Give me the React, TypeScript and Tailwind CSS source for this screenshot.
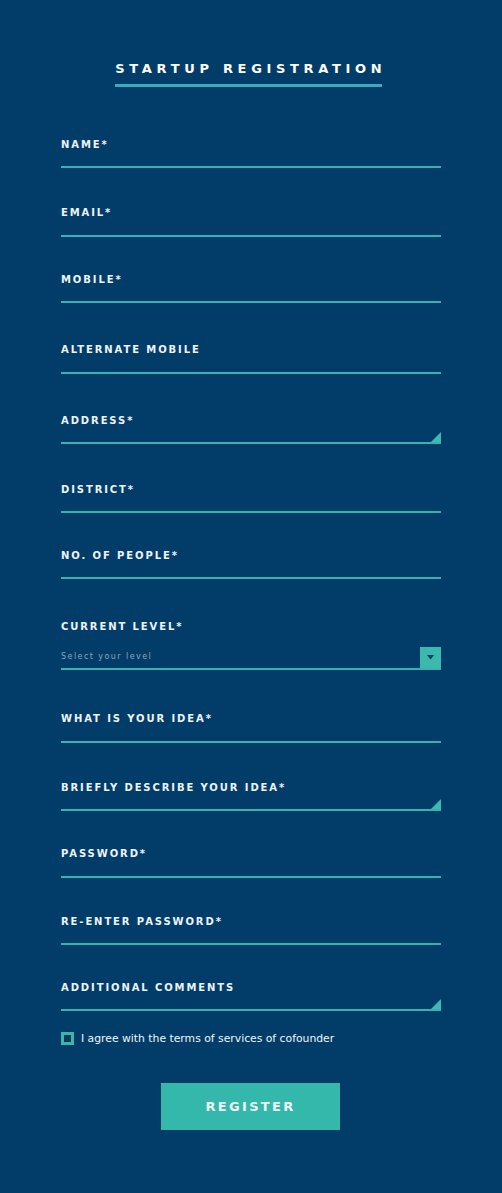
import React from "react";

type Field = {
  label: string;
  mt: string;
  h: string;
  kind?: "text" | "area" | "select";
};

// h includes the 2px bottom border (border-box)
const fields: Field[] = [
  { label: "NAME*", mt: "mt-0", h: "h-[17px]" },
  { label: "EMAIL*", mt: "mt-[39px]", h: "h-[18px]" },
  { label: "MOBILE*", mt: "mt-[37px]", h: "h-[17px]" },
  { label: "ALTERNATE MOBILE", mt: "mt-[41px]", h: "h-[18px]" },
  { label: "ADDRESS*", mt: "mt-[41px]", h: "h-[17px]", kind: "area" },
  { label: "DISTRICT*", mt: "mt-[40px]", h: "h-[17px]" },
  { label: "NO. OF PEOPLE*", mt: "mt-[37px]", h: "h-[17px]" },
  { label: "CURRENT LEVEL*", mt: "mt-[42px]", h: "h-[37px]", kind: "select" },
  { label: "WHAT IS YOUR IDEA*", mt: "mt-[43px]", h: "h-[18px]" },
  { label: "BRIEFLY DESCRIBE YOUR IDEA*", mt: "mt-[39px]", h: "h-[17px]", kind: "area" },
  { label: "PASSWORD*", mt: "mt-[37px]", h: "h-[18px]" },
  { label: "RE-ENTER PASSWORD*", mt: "mt-[38px]", h: "h-[17px]" },
  { label: "ADDITIONAL COMMENTS", mt: "mt-[37px]", h: "h-[17px]", kind: "area" },
];

function FormField({ f }: { f: Field }) {
  return (
    <div className={f.mt}>
      <label className="block h-[12px] text-[10px] leading-[12px] font-bold tracking-[0.19em] text-[#eef3f7]">
        {f.label}
      </label>
      <div className={`relative ${f.h} border-b-2 border-[#38b2b0]`}>
        {f.kind === "area" && (
          <svg
            className="absolute right-0 bottom-0"
            width="10"
            height="10"
            viewBox="0 0 10 10"
          >
            <polygon points="10,0 10,10 0,10" fill="#3cbcb0" />
          </svg>
        )}
        {f.kind === "select" && (
          <div className="absolute inset-x-0 bottom-0 flex items-end justify-between">
            <span className="mb-[6px] text-[8px] leading-[10px] tracking-[0.18em] text-[#8ca6bd]">
              Select your level
            </span>
            <div className="flex h-[21px] w-[21px] items-center justify-center bg-[#3cb8ae]">
              <svg width="7" height="5" viewBox="0 0 7 5">
                <polygon points="0,0 7,0 3.5,4.5" fill="#0b3a5c" />
              </svg>
            </div>
          </div>
        )}
      </div>
    </div>
  );
}

export default function App() {
  return (
    <div
      className="min-h-[1193px] bg-[#023d69] pt-[61px] pb-[62px]"
      style={{ fontFamily: '"DejaVu Sans", "Liberation Sans", sans-serif' }}
    >
      <div className="flex justify-center">
        <h1 className="mr-[5px] whitespace-nowrap border-b-[3px] border-[#3aabb8] pb-[7px] text-[13px] leading-[16px] font-bold tracking-[0.36em] text-white">
          <span className="mr-[-0.36em]">STARTUP REGISTRATION</span>
        </h1>
      </div>

      <form className="mx-auto mt-[52px] w-[380px]">
        {fields.map((f) => (
          <FormField key={f.label} f={f} />
        ))}

        <div className="mt-[21px] flex items-center gap-[7px]">
          <span className="block h-[13px] w-[13px] border-[3px] border-[#3ab6ad] bg-[#0b3a5c]" />
          <span className="text-[10.8px] leading-[13px] text-[#f1f5f8]">
            I agree with the terms of services of cofounder
          </span>
        </div>

        <div className="mt-[38px] flex justify-center">
          <button
            type="button"
            className="mr-[1px] h-[47px] w-[179px] bg-[#34b8ac] text-[13px] font-bold tracking-[0.18em] text-[#eef6f6]"
          >
            REGISTER
          </button>
        </div>
      </form>
    </div>
  );
}
